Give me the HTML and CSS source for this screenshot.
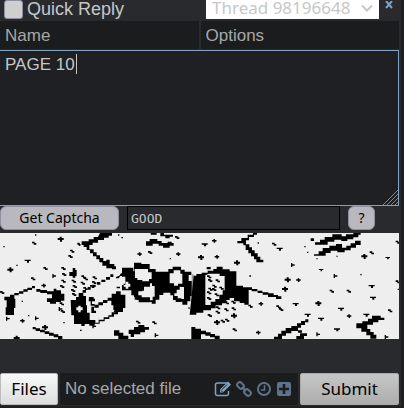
FILE: index.html
```
<!DOCTYPE html>
<html lang="en">
<head>
<meta charset="utf-8">
<title>Quick Reply</title>
<link rel="stylesheet" href="styles.css">
</head>
<body>
<form class="reply">
  <header class="bar">
    <input type="checkbox" class="pin" id="pin">
    <label for="pin" class="title">Quick Reply</label>
    <div class="thread">
      <select class="thread-select" aria-label="Thread"><option>Thread 98196648</option></select>
      <svg class="chevron" viewBox="0 0 12 8" aria-hidden="true"><path d="M1 1.500l5 5 5-5"/></svg>
    </div>
    <button type="button" class="close" aria-label="Close"><svg viewBox="0 0 8 8" aria-hidden="true"><path d="M1 0l6 7M7 0L1 7"/></svg></button>
  </header>
  <div class="fields">
    <input class="field" type="text" placeholder="Name" aria-label="Name">
    <input class="field" type="text" placeholder="Options" aria-label="Options">
  </div>
  <div class="comment">
    <textarea class="text" aria-label="Comment" spellcheck="false">PAGE 10</textarea>
    <span class="caret"></span>
    <svg class="grip" viewBox="0 0 15 15" aria-hidden="true"><path d="M0 15L15 0M4 15L15 4M8 15l7-7M12 15l3-3"/></svg>
  </div>
  <div class="captcha-row">
    <button type="button" class="pill get">Get Captcha</button>
    <input class="answer" type="text" value="GOOD" aria-label="Captcha answer" spellcheck="false">
    <button type="button" class="pill help">?</button>
  </div>
  <svg class="captcha" viewBox="0 0 399 106" role="img" aria-label="Captcha">
    <defs>
      <path id="d" d="M-3-9h6v4h6v6H4v5h-6V1h-7v-6h6z"/>
      <path id="t" d="M-9-3H9V1H4v5h-6V1h-7z"/>
      <path id="r" d="M-5-6h4v4h7v4h-7v4h-4z"/>
      <path id="s" d="M-6-4h8v4h5v5H-1v-4h-5z"/>
    </defs>
    <g transform="translate(0 -3) scale(.33333)">
      <path d="M300 9h36v8h-10v6h-14v7h-18v8h-16v7h-10v13h13v9h9v9h10v8h10v9h9v-4h10v13h14v7h5v9h-12v-3h-17v-8h-12v-10h-9v-9h-9v-9h-10v-9h-9v-10h-10v-9h-9V45h-6V34h21v-6h15v-7h13z"/>
      <path d="M232 38h6l5 8-5 2-6-5z"/>
      <path d="M13 200h17v-6h13v-5h14v-5h13v-6h12v-5h14v-5h9v7h-9v5H83v5H70v6H56v5H43v10h3v28h-4v21H17v-23h3v-21h-7z"/>
      <path d="M109 177h12v3h20v4h20v-8h8v5h14v10h10v21h-10v4h-15v5h-18v-5h-9v-11h15v-12h-15v-4h-20v-4h-12z"/>
      <path d="M98 291h9v4h13v4h14v5h14v4h13v5h14v5h12v9h-13v-5h-13v-5h-14v-5h-13v-5h-14v-4h-13v-5h-9z"/>
      <g transform="translate(150 75)">
        <path fill-rule="evenodd" d="M62 135h16v-9h8v-12h12v-9h15v-9h14v-7h14v-8h13v-7h14v-8h13v-8h9v8h-10v8h-14v7h-15v8h-14v7h-15v8h-14v9h-8v10h8v28h3v22h8v22h17v8h10v-9h15v-7h14v-6h10v-9h12v-7h-7v-14h-6v-14h-12v7h-13v7h-13v7h-13v-9h12v-7h14v-7h14v-7h12v-12h13v-7h14v10h14v40h-7v12h-15v7h-12v7h-14v7h-14v7h-15v7h-15v6h-16v-5h-14v6H94v-6H72v-26h-8zM85 152v5h-6v9h6v6h7v-6h6v-9h-6v-5z"/>
        <path fill-rule="evenodd" d="M216 38h34v11h5v32h45v14h-18v12h-18v20h36v15h-34v-8h-12v-13h-10v-15h-28V90h10V65h-10zM227 80v6h-6v9h6v6h8v-6h6v-9h-6v-6z"/>
        <path d="M117 126h14v5h4v8h-9v8h8v5h-12v-13h-6zM124 155h8v12h6v7h-14zM198 66l10-4 5-7h7v8h-9l-5 7h-8zM200 95h10v5h-10zM194 164h13v6h-4v7h-7v-6h-5z"/>
      </g>
      <path d="M218 114h8v6h4v18h-4v5h-8v-5h-10v-12h10zM342 301h16v7h12v9h15v10h-30v-10h-13zM386 299h16v22h-10v-9h-6z"/>
      <use href="#d" x="182" y="29"/><use href="#d" x="31" y="121"/><use href="#d" x="135" y="294"/><use href="#d" x="50" y="326"/>
      <use href="#t" x="83" y="92"/><use href="#s" x="102" y="39"/><use href="#s" x="136" y="115"/><use href="#s" x="99" y="146"/><use href="#r" x="162" y="138"/><use href="#d" x="131" y="168" transform="translate(33 42) scale(.75)"/>
      <use href="#s" x="216" y="63"/><use href="#s" x="211" y="79"/><use href="#s" x="190" y="115"/><use href="#s" x="192" y="133"/><use href="#s" x="190" y="153"/><use href="#s" x="186" y="169"/><use href="#s" x="185" y="221"/><use href="#r" x="181" y="237"/><use href="#s" x="188" y="244"/>
      <use href="#s" x="221" y="153"/><use href="#s" x="224" y="169"/><use href="#s" x="219" y="181"/><use href="#s" x="222" y="193"/><use href="#s" x="250" y="140"/><use href="#s" x="257" y="146"/><use href="#s" x="248" y="159"/><use href="#s" x="256" y="175"/><use href="#s" x="284" y="143"/><use href="#s" x="282" y="157"/><use href="#s" x="276" y="169"/>
      <use href="#r" x="23" y="266"/><use href="#d" x="67" y="274" transform="translate(17 68) scale(.75)"/><use href="#r" x="110" y="265"/><use href="#r" x="282" y="289"/><use href="#s" x="6" y="187"/>
      <path d="M10 48h4v4h-4zM49 104h4v4h-4zM105 13h4v4h-4zM65 212h4v4h-4zM84 255h4v4h-4zM190 276h4v4h-4zM240 299h5v4h-5zM354 13h4v4h-4zM364 21h5v4h-5z"/>
    </g>
    <g transform="translate(134 -3) scale(.33333)">
      <path d="M36 34h11v-7h23v6h13v6h18v-4h12v4h6v8h-12v6H87v-6H74v-6H56v6H36zM50 9h18v5H50zM79 9h11v5h27v6h-10v5H94v-6H79z"/>
      <path d="M341 14h19v7h-15v10h-9v12h10v9h8v9h8v9h9v10h8v9h9v8h-21v-9h-7v-9h-9v-9h-8v-10h-8V46h-7v-6h-18v-7h12v-9h19zM357 9h12v5h-12z"/>
      <path fill-rule="evenodd" d="M0 98h22v4h25v15h18v8h38v-8h13v-7h25v9h11v6h20v10h-8v18h12v45h-7v16h-9v10h-15v-9h-12v-8h-16v-11h-8v-8H88v7H76v14H65v12H53v-5H22v-6H9v-9H0zM2 117v27h8v6h15v4h20v-7h8v-20H42v-10zM25 164v20H13v12h10v10h23v5h10v-11h6v-32h-8v-8H36v4zM119 121v9h-12v30h13v7h12v-6h13v-30h-6v-10zM137 170v9h-9v11h-7v9h10v8h19v-36z"/>
      <path fill="#999" d="M173 133h6v69h-6z"/>
      <path fill-rule="evenodd" d="M179 137h8v-5h16v-4h18v-6h17v-5h10v-7h18v8h21v6h20v43h20v5h27v5h16v5h15v5h18v7h-17v-5h-15v-5h-18v-4h-9v44h-13v-5h-14v-5h-17v-10h-13v6h-10v10h-13v6h-19v9h-14v6h-23v7h-21v6h-20zM214 136v89h16v-10h14v-8h12v-13h10v-13h6v-43h-15v-7h-33z"/>
      <path d="M172 291h12v5h17v6h15v5h14v5h13v5h14v10h-15v-5h-14v-5h-14v-4h-13v14h-29zM0 291h13v-6h18v6h14v8H33v8H19v6H0z"/>
      <path d="M117 198h13v7h12v11h-17v-6h-8zM218 111h12v7h-12z"/>
      <use href="#d" x="201" y="84"/><use href="#t" x="212" y="43"/><use href="#d" x="241" y="34" transform="translate(60 8) scale(.75)"/><use href="#d" x="249" y="82" transform="translate(62 20) scale(.75)"/><use href="#d" x="309" y="100"/><use href="#d" x="17" y="74" transform="translate(4 18) scale(.75)"/><use href="#s" x="48" y="67"/><use href="#d" x="133" y="74" transform="translate(33 18) scale(.75)"/><use href="#s" x="129" y="22"/>
      <use href="#s" x="225" y="140"/><use href="#s" x="228" y="151"/><use href="#s" x="251" y="152"/><use href="#s" x="241" y="168"/><use href="#s" x="229" y="177"/><use href="#s" x="240" y="178"/><use href="#s" x="262" y="174"/><use href="#s" x="225" y="188"/><use href="#s" x="248" y="194"/><use href="#s" x="225" y="205"/>
      <use href="#s" x="252" y="233"/><use href="#s" x="251" y="246"/><use href="#s" x="227" y="256"/><use href="#s" x="278" y="218"/><use href="#s" x="277" y="239"/><use href="#s" x="298" y="216"/><use href="#s" x="299" y="236"/><use href="#d" x="300" y="259"/><use href="#d" x="249" y="279"/><use href="#s" x="266" y="273"/><use href="#s" x="279" y="270"/>
      <use href="#s" x="302" y="299"/><use href="#s" x="349" y="228"/><use href="#d" x="381" y="222" transform="translate(95 56) scale(.75)"/><use href="#d" x="373" y="309" transform="translate(93 77) scale(.75)"/><use href="#s" x="61" y="278"/><use href="#s" x="12" y="276"/><use href="#r" x="67" y="316"/>
      <path d="M107 84h4v4h-4zM346 136h5v4h-5zM163 232h4v4h-4zM371 37h4v4h-4z"/>
    </g>
    <g transform="translate(268 -3) scale(.33333)">
      <path d="M141 37h15v-8h14v-8h23v-8h28v6h13v-6h22V9h22v5h-7v8h-15v6h-18v5h-18v-4h-21v6h-20v9h-38zM138 73h14v-9h12v-10h20v-7h20v-5h18v11h13v-6h13v-7h13v-8h17v13h-14v8h-16v8h-18v6h-22v-5h-20v7h-15v8h-35zM128 33h10v-8h-10z"/>
      <path d="M18 320h12v-9h10v-9h13v-8h17v-6h17v-8h12v-7h13v-5h9v9h-10v8h-12v8h-9v8h12v7H90v-5H70v7H54v7H42v10H18zM85 318h11v-8h21v8h-9v9H85zM0 190h17v5h13v4h10v8H24v-6H0z"/>
      <path d="M265 280h18v-6h17v-8h12v-9h26v6h11v7h-18v7h-16v7h-17v13h9v9h10v8h8v12h-18v-10h-12v-11h-15v-10h-15z"/>
      <use href="#t" x="35" y="56"/><use href="#s" x="18" y="42"/><use href="#r" x="74" y="105"/><use href="#t" x="159" y="119" transform="translate(40 30) scale(.75)"/><use href="#r" x="202" y="138"/><use href="#d" x="289" y="81"/><use href="#s" x="311" y="68"/><use href="#t" x="359" y="83" transform="translate(90 21) scale(.75)"/>
      <use href="#d" x="59" y="151"/><use href="#d" x="91" y="151" transform="translate(23 38) scale(.75)"/><use href="#d" x="51" y="179"/><use href="#d" x="151" y="222"/><use href="#t" x="83" y="222"/><use href="#t" x="119" y="254"/><use href="#t" x="159" y="266"/><use href="#t" x="207" y="298"/><use href="#t" x="219" y="236"/><use href="#t" x="311" y="168"/><use href="#t" x="315" y="203"/><use href="#t" x="295" y="254"/>
      <use href="#s" x="191" y="183"/><use href="#s" x="242" y="183"/><use href="#s" x="31" y="230"/><use href="#s" x="39" y="238"/><use href="#d" x="243" y="259" transform="translate(61 65) scale(.75)"/><use href="#s" x="366" y="242"/><use href="#r" x="150" y="313"/><use href="#r" x="355" y="321"/><use href="#s" x="389" y="36"/><use href="#s" x="389" y="155"/>
      <path d="M109 48h4v4h-4zM117 65h4v4h-4zM145 85h4v3h-4zM205 77h4v3h-4zM277 132h4v4h-4zM389 176h4v4h-4z"/>
    </g>
  </svg>
  <footer class="upload">
    <button type="button" class="files">Files</button>
    <div class="filebox">
      <span class="filename">No selected file</span>
      <a href="#" class="tool edit" aria-label="Edit"><svg viewBox="0 0 18 16"><path d="M13 2H3.500Q1.500 2 1.500 4v8.500q0 2 2 2h9q2 0 2-2V10" fill="none" stroke="currentColor" stroke-width="1.500"/><path d="M14 .500l3 3-8 8H6v-3z" fill="currentColor"/><path d="M7 9.500l2 2M8 8.500l5-5" stroke="#1b1c1e" fill="none"/></svg></a>
      <a href="#" class="tool" aria-label="Link"><svg viewBox="0 0 16 16"><g fill="none" stroke="currentColor" stroke-width="2"><rect x="-3.500" y="-2.500" width="7" height="5" rx="2" transform="translate(4.500 4.500) rotate(45)"/><rect x="-3.500" y="-2.500" width="7" height="5" rx="2" transform="translate(11.500 11.500) rotate(45)"/><path d="M6 6l4 4"/></g></svg></a>
      <a href="#" class="tool" aria-label="History"><svg viewBox="0 0 16 16"><g fill="none" stroke="currentColor"><circle cx="8" cy="8" r="6" stroke-width="2"/><path d="M8.500 4v5H5" stroke-width="1.500"/></g></svg></a>
      <a href="#" class="tool" aria-label="Add"><svg viewBox="0 0 16 16"><rect x="1" y="1" width="14" height="14" rx="2" fill="currentColor"/><path d="M8 3v10M3 8h10" stroke="#1b1c1e" stroke-width="2.500"/></svg></a>
    </div>
    <button type="submit" class="submit">Submit</button>
  </footer>
</form>
</body>
</html>
```
FILE: styles.css
```
* { box-sizing: border-box; }
body {
  margin: 0;
  background: #1d1f21;
  color: #c5c8c6;
  font: 17px/20px "Liberation Sans", Arial, sans-serif;
}
button, input, select, textarea { font: inherit; color: inherit; margin: 0; }
.reply {
  margin-right: 3px;
  padding-right: 2px;
  padding-bottom: 1px;
  background: #282a2e;
}
.bar { display: flex; align-items: flex-start; height: 21px; }
.pin {
  appearance: none;
  width: 19px;
  height: 19px;
  margin: 0 4px;
  border: 1px solid #8f8f9d;
  border-radius: 3px;
  background: #cfcfcf;
}
.title { flex: 1; font-size: 18px; line-height: 18px; }
.thread { position: relative; width: 173px; }
.thread-select {
  appearance: none;
  display: block;
  width: 100%;
  height: 19px;
  padding: 0 6px 4px;
  border: 0;
  border-radius: 0;
  background: #fff;
  color: #c5c8c6;
  font: 17px/15px "Noto Sans", sans-serif;
}
.chevron { position: absolute; right: 6px; top: 4px; width: 12px; height: 8px; fill: none; stroke: #c5c8c6; stroke-width: 2; }
.close { width: 20px; height: 10px; padding: 0 6px; border: 0; background: none; color: #81a2be; }
.close svg { display: block; width: 8px; height: 8px; fill: none; stroke: currentColor; stroke-width: 2; }
.fields { display: grid; grid-template-columns: 1fr 1fr; gap: 2px; height: 29px; }
.field { min-width: 0; height: 28px; padding: 2px 5px 0; border: 0; background: #1b1c1e; }
.field::placeholder { color: #a6a8a7; opacity: 1; }
.comment { position: relative; }
.text {
  display: block;
  width: 100%;
  height: 156px;
  padding: 4px 5px;
  border: 1px solid #81a2be;
  border-left: 0;
  background: #1f2023;
  resize: none;
  outline: 0;
}
.caret { position: absolute; left: 76px; top: 4px; width: 1px; height: 20px; background: #c5c8c6; }
.grip { position: absolute; right: 1px; bottom: 1px; width: 15px; height: 15px; fill: none; stroke: #85878a; }
.captcha-row { display: flex; gap: 8px; height: 27px; padding-right: 24px; }
.pill {
  height: 24px;
  padding: 0;
  border: 1px solid #8f8f9d;
  border-radius: 6px;
  background: #b9b8be;
  color: #000;
  font: 14px/20px "Noto Sans", sans-serif;
}
.get { width: 119px; }
.help { width: 27px; }
.answer {
  flex: 1;
  min-width: 0;
  height: 24px;
  padding: 0 3px;
  border: 1px solid #000;
  background: #282a2e;
  font: 13px/20px "DejaVu Sans Mono", monospace;
}
.captcha { display: block; width: 100%; background: #eee; }
.upload { display: flex; margin-top: 34px; height: 32px; gap: 2px; }
.files, .submit {
  padding: 0;
  border: 1px solid #bbb;
  border-radius: 2px;
  color: #000;
  font: 17px/24px "Noto Sans", sans-serif;
}
.files { width: 58px; background: linear-gradient(#f8f8f8, #ddd); }
.submit { width: 99px; background: linear-gradient(#c6c6c6, #adadad); border-color: #aaa; }
.filebox { display: flex; flex: 1; align-items: center; gap: 4px; padding: 0 6px 0 5px; background: #1b1c1e; color: #a6a8a7; }
.filename { flex: 1; white-space: nowrap; }
.tool { display: block; width: 16px; height: 16px; color: #5d7389; }
.tool svg { display: block; width: 100%; height: 100%; }
.edit { width: 18px; color: #81a2be; }
```
